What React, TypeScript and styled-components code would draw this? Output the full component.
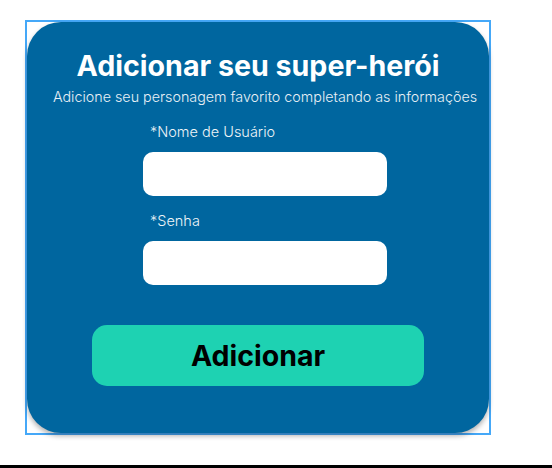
import React from "react";
import styled, { createGlobalStyle } from "styled-components";

const GlobalStyle = createGlobalStyle`
  html, body {
    margin: 0;
    padding: 0;
    background: #ffffff;
  }
  body {
    font-family: Inter, "Noto Sans", sans-serif;
  }
`;

const Page = styled.div`
  width: 552px;
  height: 468px;
  display: flex;
  flex-direction: column;
  box-sizing: border-box;
  padding: 20px 0 0 25px;
`;

const Frame = styled.div`
  width: 466px;
  height: 415px;
  box-sizing: border-box;
  border: 2px solid #45a8f8;
`;

const Card = styled.form`
  height: 411px;
  box-sizing: border-box;
  background: #00669f;
  border-radius: 34px;
  box-shadow: 0 3px 5px rgba(0, 0, 0, 0.3);
  display: flex;
  flex-direction: column;
  align-items: center;
  padding-top: 27px;
`;

const Title = styled.h1`
  margin: 0;
  font-family: Inter, sans-serif;
  font-weight: 700;
  font-size: 28.6px;
  line-height: 34px;
  color: #ffffff;
`;

const Subtitle = styled.p`
  margin: 5px 0 0 14px;
  font-family: Inter, sans-serif;
  font-weight: 300;
  font-size: 14.3px;
  line-height: 18px;
  color: #e8f0f6;
  white-space: nowrap;
`;

const Fields = styled.div`
  width: 244px;
  margin-left: 14px;
  margin-top: 16px;
  display: flex;
  flex-direction: column;
`;

const Label = styled.label<{ $gap?: number }>`
  font-family: Inter, sans-serif;
  font-weight: 300;
  font-size: 14.5px;
  line-height: 20px;
  color: #eef4f8;
  padding-left: 7px;
  margin-top: ${(p) => p.$gap ?? 0}px;
  margin-bottom: 10px;
`;

const Input = styled.input`
  width: 244px;
  height: 44px;
  box-sizing: border-box;
  border: none;
  border-radius: 10px;
  background: #ffffff;
  outline: none;
`;

const Button = styled.button`
  margin-top: 40px;
  width: 332px;
  height: 61px;
  border: none;
  border-radius: 15px;
  background: #1ed2b2;
  font-family: Inter, sans-serif;
  font-weight: 700;
  font-size: 28.5px;
  color: #000000;
  cursor: pointer;
`;

const Spacer = styled.div`
  flex: 1;
`;

const BottomRule = styled.div`
  height: 3px;
  background: #000000;
  margin-left: -25px;
`;

export default function App() {
  return (
    <>
      <GlobalStyle />
      <Page>
        <Frame>
          <Card onSubmit={(e) => e.preventDefault()}>
            <Title>Adicionar seu super-herói</Title>
            <Subtitle>Adicione seu personagem favorito completando as informações</Subtitle>
            <Fields>
              <Label htmlFor="user">*Nome de Usuário</Label>
              <Input id="user" type="text" />
              <Label htmlFor="pass" $gap={15}>*Senha</Label>
              <Input id="pass" type="password" />
            </Fields>
            <Button type="submit">Adicionar</Button>
          </Card>
        </Frame>
        <Spacer />
        <BottomRule />
      </Page>
    </>
  );
}
